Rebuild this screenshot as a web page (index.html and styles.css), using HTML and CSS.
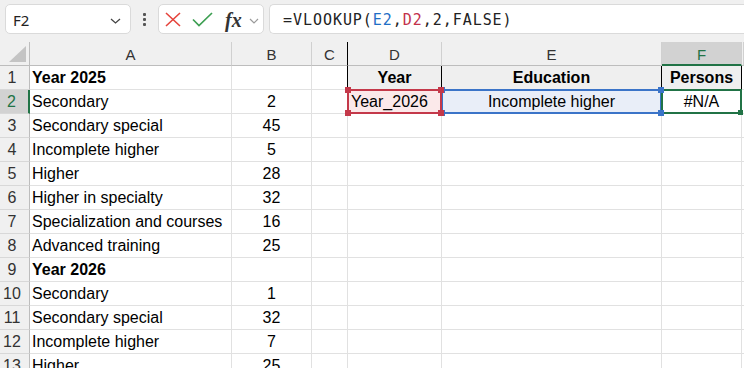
FILE: index.html
```html
<!DOCTYPE html>
<html>
<head>
    <meta charset="utf-8">
    <title>Sheet</title>
    <link rel="stylesheet" href="styles.css">
</head>
<body>
    <div class="toolbar">
        <div class="namebox">
            <span class="name">F2</span>
            <svg class="chev" width="11" height="6" viewBox="0 0 11 6"><polyline points="1,1 5.5,5 10,1" fill="none" stroke="#444" stroke-width="1.3"/></svg>
        </div>
        <div class="grip"><i></i><i></i><i></i></div>
        <div class="fxbox">
            <svg class="ico-x" width="16" height="15" viewBox="0 0 16 15"><path d="M1 1 L15 14 M15 1 L1 14" stroke="#e5443c" stroke-width="1.6" fill="none"/></svg>
            <svg class="ico-ok" width="21" height="15" viewBox="0 0 21 15"><polyline points="1,7.5 7,13.5 20,1" stroke="#3d9f52" stroke-width="1.7" fill="none"/></svg>
            <span class="fx">fx</span>
            <svg class="chev-sm" width="10" height="6" viewBox="0 0 10 6"><polyline points="1,1 5,5 9,1" fill="none" stroke="#9a9a9a" stroke-width="1.2"/></svg>
        </div>
        <div class="formula">=VLOOKUP(<span class="ref-b">E2</span>,<span class="ref-r">D2</span>,2,FALSE)</div>
    </div>

    <div class="sheet">
        <!-- column headers -->
        <div class="ch corner"><svg width="30" height="23" viewBox="0 0 30 23"><polygon points="26,4 26,20 9,20" fill="#c4c4c4"/></svg></div>
        <div class="ch">A</div>
        <div class="ch">B</div>
        <div class="ch edge">C</div>
        <div class="ch">D</div>
        <div class="ch">E</div>
        <div class="ch active">F</div>
        <div class="ch"></div>

        <!-- row 1 -->
        <div class="rh">1</div>
        <div class="c bold">Year 2025</div>
        <div class="c"></div>
        <div class="c edge"></div>
        <div class="c th">Year</div>
        <div class="c th">Education</div>
        <div class="c th">Persons</div>
        <div class="c"></div>

        <!-- row 2 -->
        <div class="rh active">2</div>
        <div class="c">Secondary</div>
        <div class="c num">2</div>
        <div class="c"></div>
        <div class="c pick red">Year_2026
            <span class="frame"></span>
            <span class="hd tl"></span><span class="hd tr"></span><span class="hd bl"></span><span class="hd br"></span>
        </div>
        <div class="c pick blue num">Incomplete higher
            <span class="frame"></span>
            <span class="hd tl"></span><span class="hd tr"></span><span class="hd bl"></span><span class="hd br"></span>
        </div>
        <div class="c pick green num">#N/A
            <span class="frame"></span>
            <span class="hd br"></span>
        </div>
        <div class="c"></div>

        <div class="rh">3</div><div class="c">Secondary special</div><div class="c num">45</div><div class="c"></div><div class="c"></div><div class="c"></div><div class="c"></div><div class="c"></div>
        <div class="rh">4</div><div class="c">Incomplete higher</div><div class="c num">5</div><div class="c"></div><div class="c"></div><div class="c"></div><div class="c"></div><div class="c"></div>
        <div class="rh">5</div><div class="c">Higher</div><div class="c num">28</div><div class="c"></div><div class="c"></div><div class="c"></div><div class="c"></div><div class="c"></div>
        <div class="rh">6</div><div class="c">Higher in specialty</div><div class="c num">32</div><div class="c"></div><div class="c"></div><div class="c"></div><div class="c"></div><div class="c"></div>
        <div class="rh">7</div><div class="c">Specialization and courses</div><div class="c num">16</div><div class="c"></div><div class="c"></div><div class="c"></div><div class="c"></div><div class="c"></div>
        <div class="rh">8</div><div class="c">Advanced training</div><div class="c num">25</div><div class="c"></div><div class="c"></div><div class="c"></div><div class="c"></div><div class="c"></div>
        <div class="rh">9</div><div class="c bold">Year 2026</div><div class="c"></div><div class="c"></div><div class="c"></div><div class="c"></div><div class="c"></div><div class="c"></div>
        <div class="rh">10</div><div class="c">Secondary</div><div class="c num">1</div><div class="c"></div><div class="c"></div><div class="c"></div><div class="c"></div><div class="c"></div>
        <div class="rh">11</div><div class="c">Secondary special</div><div class="c num">32</div><div class="c"></div><div class="c"></div><div class="c"></div><div class="c"></div><div class="c"></div>
        <div class="rh">12</div><div class="c">Incomplete higher</div><div class="c num">7</div><div class="c"></div><div class="c"></div><div class="c"></div><div class="c"></div><div class="c"></div>
        <div class="rh">13</div><div class="c">Higher</div><div class="c num">25</div><div class="c"></div><div class="c"></div><div class="c"></div><div class="c"></div><div class="c"></div>
    </div>
</body>
</html>
```

FILE: styles.css
```css
html, body {
    margin: 0;
    padding: 0;
    width: 744px;
    height: 368px;
    overflow: hidden;
    background: #fff;
    font-family: "Liberation Sans", Arial, sans-serif;
}

/* formula bar */
.toolbar {
    display: flex;
    align-items: flex-start;
    height: 42px;
    box-sizing: border-box;
    padding: 4px 0 0 5px;
    background: #f0f0f0;
}

.namebox, .fxbox, .formula {
    height: 30px;
    box-sizing: border-box;
    background: #fff;
    border: 1px solid #dadada;
    border-radius: 5px;
}

.namebox {
    width: 126px;
    display: flex;
    align-items: center;
    padding: 0 9px 0 7px;
}

.name {
    flex: 1;
    font-family: "Noto Sans", sans-serif;
    font-size: 15px;
    color: #222;
    padding-top: 2px;
}

.chev {
    margin-top: 3px;
}

.grip {
    width: 27px;
    display: flex;
    flex-direction: column;
    align-items: center;
    gap: 2px;
    padding-top: 9px;
}

.grip i {
    width: 3px;
    height: 3px;
    border-radius: 1px;
    background: #555;
}

.fxbox {
    width: 106px;
    display: flex;
    align-items: center;
    padding-top: 1px;
}

.ico-x { margin-left: 6px; }
.ico-ok { margin-left: 11px; }

.fx {
    margin-left: 12px;
    font-family: "Liberation Serif", serif;
    font-style: italic;
    font-weight: bold;
    font-size: 20px;
    color: #333;
    line-height: 20px;
}

.chev-sm {
    margin-left: 7px;
    margin-top: 2px;
}

.formula {
    flex: 1;
    margin-left: 5px;
    border-right: none;
    border-radius: 5px 0 0 5px;
    padding: 4px 0 0 13px;
    font-family: "DejaVu Sans Mono", monospace;
    font-size: 15px;
    letter-spacing: 0.95px;
    line-height: 22px;
    color: #222;
    white-space: nowrap;
}

.ref-b { color: #1f6fc6; }
.ref-r { color: #c3314a; }

/* grid */
.sheet {
    display: grid;
    grid-template-columns: 30px 202px 80px 36px 94px 220px 80px 2px;
    grid-auto-rows: 24px;
}

.sheet > div {
    box-sizing: border-box;
    white-space: nowrap;
}

.ch {
    background: #f0f0f0;
    border-right: 1px solid #d0d0d0;
    border-bottom: 1px solid #bdbdbd;
    text-align: center;
    font-size: 15px;
    line-height: 21px;
    padding-top: 2px;
    color: #333;
}

.ch.corner {
    padding: 0;
    border-right-color: #bdbdbd;
}

.ch.corner svg { display: block; }

.ch.edge { border-right-color: #000; }

.ch.active {
    background: #d2d2d2;
    color: #217346;
    border-bottom: 2px solid #217346;
}

.rh {
    background: #f0f0f0;
    border-right: 1px solid #bdbdbd;
    border-bottom: 1px solid #d8d8d8;
    text-align: center;
    padding: 1px 5px 0 0;
    font-size: 16px;
    line-height: 22px;
    color: #333;
}

.rh.active {
    background: #d2d2d2;
    color: #217346;
    border-right: 2px solid #217346;
}

.c {
    border-right: 1px solid #e1e1e1;
    border-bottom: 1px solid #e1e1e1;
    padding: 1px 2px 0;
    font-size: 16px;
    line-height: 22px;
    color: #000;
}

.c.edge { border-right-color: #000; }
.bold { font-weight: bold; }
.num { text-align: center; }

.c.th {
    background: #efefef;
    font-weight: bold;
    text-align: center;
    border-right-color: #000;
}

/* reference highlights */
.pick { position: relative; }

.frame {
    position: absolute;
    left: -1px;
    top: -1px;
    right: -1px;
    bottom: -1px;
    border: 2px solid;
}

.hd {
    position: absolute;
    width: 6px;
    height: 6px;
    z-index: 5;
}

.hd.tl { left: -3px; top: -3px; }
.hd.tr { left: calc(100% - 3px); top: -3px; }
.hd.bl { left: -3px; top: calc(100% - 3px); }
.hd.br { left: calc(100% - 3px); top: calc(100% - 3px); }

.red { background: #fbe9ea; padding-left: 3px; }
.red .frame { border-color: #c4394a; z-index: 3; }
.red .hd { background: #c4394a; z-index: 6; }

.blue { background: #e9eef8; }
.blue .frame { border-color: #3b74c8; z-index: 2; }
.blue .hd { background: #3b74c8; }

.green .frame { border-color: #217346; z-index: 2; }
.green .hd { background: #217346; width: 5px; height: 5px; }
```
